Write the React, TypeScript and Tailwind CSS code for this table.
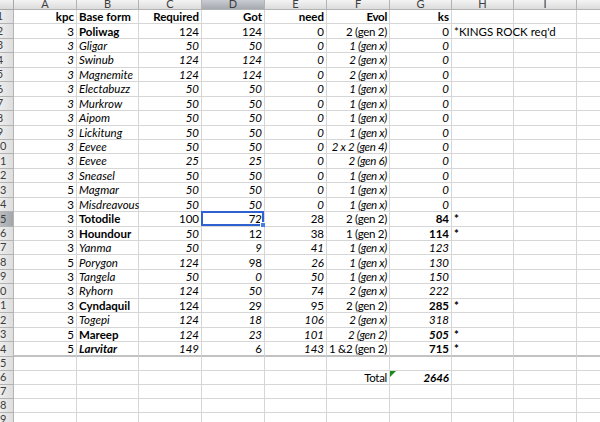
import React from 'react'

type Cell = { v: string; s?: string }

// column widths: row header, A..I, J (cut off)
const WIDTHS = [14, 63, 62, 63, 63, 62, 63, 62, 62, 63, 60]
const LETTERS = ['A', 'B', 'C', 'D', 'E', 'F', 'G', 'H', 'I', 'J']

const c = (v: string, s = ''): Cell => ({ v, s })
const it = (vals: string[]): Cell[] => vals.map(v => c(v, 'i'))

const ROWS: Cell[][] = [
  [c('kpc', 'b'), c('Base form', 'b'), c('Required', 'b'), c('Got', 'b'), c('need', 'b'), c('Evol', 'b'), c('ks', 'b')],
  [c('3'), c('Poliwag', 'b'), c('124'), c('124'), c('0'), c('2 (gen 2)'), c('0'), c("*KINGS ROCK req'd")],
  it(['3', 'Gligar', '50', '50', '0', '1 (gen x)', '0']),
  it(['3', 'Swinub', '124', '124', '0', '2 (gen x)', '0']),
  it(['3', 'Magnemite', '124', '124', '0', '2 (gen x)', '0']),
  it(['3', 'Electabuzz', '50', '50', '0', '1 (gen x)', '0']),
  it(['3', 'Murkrow', '50', '50', '0', '1 (gen x)', '0']),
  it(['3', 'Aipom', '50', '50', '0', '1 (gen x)', '0']),
  it(['3', 'Lickitung', '50', '50', '0', '1 (gen x)', '0']),
  it(['3', 'Eevee', '50', '50', '0', '2 x 2 (gen 4)', '0']),
  it(['3', 'Eevee', '25', '25', '0', '2 (gen 6)', '0']),
  it(['3', 'Sneasel', '50', '50', '0', '1 (gen x)', '0']),
  [c('5'), ...it(['Magmar', '50', '50', '0', '1 (gen x)', '0'])],
  [c('3'), ...it(['Misdreavous', '50', '50', '0', '1 (gen x)', '0'])],
  [c('3'), c('Totodile', 'b'), c('100'), c('72'), c('28'), c('2 (gen 2)'), c('84', 'b'), c('*', 'b')],
  [c('3'), c('Houndour', 'b'), c('50', 'i'), c('12'), c('38'), c('1 (gen 2)'), c('114', 'b'), c('*', 'b')],
  [c('3'), ...it(['Yanma', '50', '9', '41', '1 (gen x)', '123'])],
  [c('5'), c('Porygon', 'i'), c('124', 'i'), c('98'), c('26', 'i'), c('1 (gen x)', 'i'), c('130', 'i')],
  [c('3'), ...it(['Tangela', '50', '0', '50', '1 (gen x)', '150'])],
  [c('3'), ...it(['Ryhorn', '124', '50', '74', '2 (gen x)', '222'])],
  [c('3'), c('Cyndaquil', 'b'), c('124'), c('29'), c('95'), c('2 (gen 2)'), c('285', 'b'), c('*', 'b')],
  [c('3'), ...it(['Togepi', '124', '18', '106', '2 (gen x)', '318'])],
  [c('5'), c('Mareep', 'b'), c('124', 'i'), c('23', 'i'), c('101', 'i'), c('2 (gen 2)', 'i'), c('505', 'bi'), c('*', 'b')],
  [c('5'), c('Larvitar', 'bi'), c('149', 'i'), c('6'), c('143', 'i'), c('1 &2 (gen 2)'), c('715', 'b'), c('*', 'b')],
  [],
  [c(''), c(''), c(''), c(''), c(''), c('Total'), c('2646', 'bi')],
  [],
  [],
  [],
]

function style(s?: string) {
  let cls = ''
  if (s?.includes('b')) cls += ' font-bold'
  if (s?.includes('i')) cls += ' italic'
  return cls
}

function DataCell({ cell, col, row }: { cell?: Cell; col: number; row: number }) {
  // B (text) and H (notes) are left aligned, the rest right aligned
  const left = col === 1 || col === 7
  const selected = row === 15 && col === 3
  const thick = row === 24
  return (
    <div
      className={`relative shrink-0 h-full border-r border-[#d6d6d6] ${thick ? 'border-b-2 border-b-[#c2c2c2]' : 'border-b border-b-[#d6d6d6]'} flex items-center ${left ? 'justify-start pl-[2px]' : 'justify-end pr-[2px]'} ${col === 7 ? 'z-10' : ''} ${col === 5 ? 'tracking-[-0.3px]' : ''}`}
      style={{ width: WIDTHS[col + 1] }}
    >
      {cell && <span className={`whitespace-nowrap${style(cell.s)}`}>{cell.v}</span>}
      {selected && (
        <div className="absolute -left-[1px] -top-[1px] right-0 bottom-0 border-2 border-[#2f62d0]">
          <div className="absolute -right-[4px] -bottom-[4px] w-[6px] h-[6px] bg-[#4a7ee0] border border-white" />
        </div>
      )}
      {row === 26 && col === 6 && (
        <div className="absolute left-0 top-0 w-0 h-0 border-t-[6px] border-t-[#1c8a1c] border-r-[6px] border-r-transparent" />
      )}
    </div>
  )
}

export default function App() {
  return (
    <div className="w-[600px] h-[422px] overflow-hidden bg-white text-[11.5px] text-black" style={{ fontFamily: 'Lato, "Liberation Sans", sans-serif' }}>
      {/* column header (top of it scrolled out of view) */}
      <div className="flex h-[10px]">
        <div className="shrink-0 h-full bg-gradient-to-b from-[#f2f2f2] to-[#d9d9d9] border-r border-b border-[#a9a9a9]" style={{ width: WIDTHS[0] }} />
        {LETTERS.map((l, i) => (
          <div
            key={l}
            className={`shrink-0 h-full overflow-hidden flex items-end justify-center border-r border-b border-[#b3b3b3] ${i === 3 ? 'bg-gradient-to-b from-[#c9ccd1] to-[#a5a9b0]' : 'bg-gradient-to-b from-[#f4f4f4] to-[#dcdcdc]'}`}
            style={{ width: WIDTHS[i + 1] }}
          >
            <span className="text-[11px] leading-[10px] text-[#3d3d3d]">{l}</span>
          </div>
        ))}
      </div>
      {ROWS.map((r, ri) => {
        const row = ri + 1
        return (
          <div key={row} className={`flex ${row <= 24 ? 'h-[14.45px]' : 'h-[14.1px]'}`}>
            {/* row header: only the right half of a wider column is in view */}
            <div
              className={`shrink-0 h-full overflow-hidden flex items-center justify-end border-r border-b border-[#b3b3b3] text-[11px] text-[#3d3d3d] ${row === 15 ? 'bg-gradient-to-r from-[#b9bcc1] to-[#a3a6ab]' : 'bg-gradient-to-r from-[#ececec] to-[#dedede]'}`}
              style={{ width: WIDTHS[0] }}
            >
              <span className="shrink-0 w-[26px] text-center whitespace-nowrap">{row}</span>
            </div>
            {LETTERS.map((l, ci) => (
              <DataCell key={l} cell={r[ci]} col={ci} row={row} />
            ))}
          </div>
        )
      })}
    </div>
  )
}
